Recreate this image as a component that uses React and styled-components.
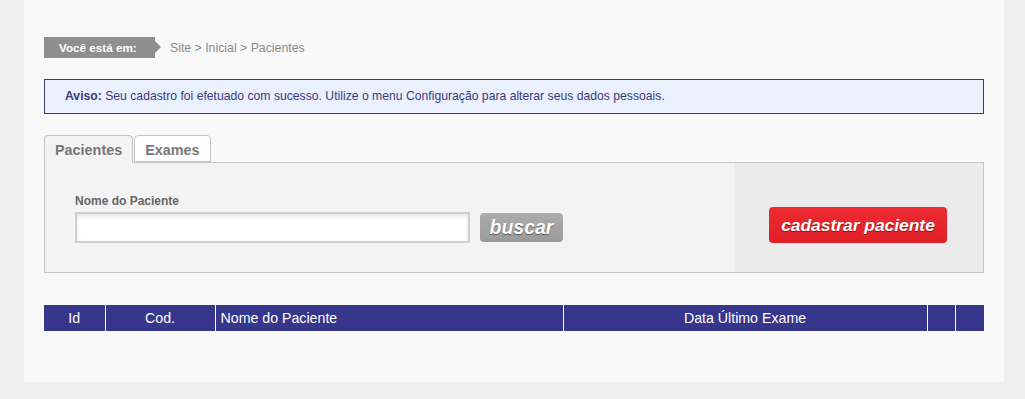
import React from "react";
import styled, { createGlobalStyle } from "styled-components";

const Global = createGlobalStyle`
  body {
    margin: 0;
    background: #efefef;
    font-family: "Liberation Sans", Arial, sans-serif;
  }
`;

const Page = styled.div`
  width: 980px;
  margin-left: 24px;
  box-sizing: border-box;
  padding: 37px 20px 51px;
  background: #f9f9f9;
`;

const Crumbs = styled.div`
  display: flex;
  align-items: center;
  height: 21px;
  font-size: 12px;
`;

const YouAre = styled.div`
  position: relative;
  width: 111px;
  height: 21px;
  box-sizing: border-box;
  padding-left: 15px;
  line-height: 21px;
  background: #8f8f8f;
  color: #fff;
  font-weight: bold;
  font-size: 11.7px;

  &::after {
    content: "";
    position: absolute;
    right: -6px;
    top: 4px;
    border-top: 6.5px solid transparent;
    border-bottom: 6.5px solid transparent;
    border-left: 6px solid #8f8f8f;
  }
`;

const Path = styled.span`
  margin-left: 15px;
  color: #8a8a8a;
  font-size: 12.3px;
`;

const Notice = styled.div`
  margin-top: 21px;
  height: 35px;
  box-sizing: border-box;
  border: 1px solid #3a3a7a;
  background: #eaf0fd;
  color: #3a3a7e;
  font-size: 12.2px;
  line-height: 33px;
  padding-left: 20px;

  b {
    font-weight: bold;
  }
`;

const Tabs = styled.div`
  display: flex;
  margin-top: 21px;
  position: relative;
  z-index: 1;
`;

const Tab = styled.div`
  height: ${(p) => (p.$active ? "28px" : "27px")};
  box-sizing: border-box;
  padding: 0 10px;
  margin-right: 1px;
  border: 1px solid #c4c4c4;
  border-bottom: ${(p) => (p.$active ? "none" : "1px solid #c4c4c4")};
  border-radius: 4px 4px 0 0;
  background: ${(p) => (p.$active ? "#f3f3f3" : "#fff")};
  color: #777;
  font-size: 14.4px;
  font-weight: bold;
  line-height: 28px;
`;

const Panel = styled.div`
  display: flex;
  height: 111px;
  margin-top: -1px;
  box-sizing: border-box;
  border: 1px solid #c6c6c6;
  background: #f3f3f3;
`;

const SearchArea = styled.div`
  flex: 1;
  padding: 31px 0 0 30px;
`;

const Label = styled.div`
  font-size: 12px;
  font-weight: bold;
  color: #666;
  height: 18px;
`;

const SearchRow = styled.div`
  display: flex;
  align-items: center;
  gap: 10px;
`;

const Input = styled.input`
  width: 395px;
  height: 31px;
  box-sizing: border-box;
  border: 2px solid #cfcfcf;
  box-shadow: inset 0 2px 4px rgba(0, 0, 0, 0.1);
  background: #fff;
  outline: none;
`;

const Button = styled.button`
  border: none;
  border-radius: 4px;
  padding: 0;
  color: #fff;
  font-family: "Liberation Sans", Arial, sans-serif;
  font-weight: bold;
  font-style: italic;
  text-shadow: 0 1px 1px rgba(0, 0, 0, 0.45);
  cursor: pointer;
`;

const GrayButton = styled(Button)`
  width: 83px;
  height: 29px;
  font-size: 19.5px;
  background: linear-gradient(#acacac, #9a9a9a);
`;

const RedButton = styled(Button)`
  width: 178px;
  height: 36px;
  font-size: 17.4px;
  background: linear-gradient(#ed2b31, #e11f27);
`;

const ActionArea = styled.div`
  width: 248px;
  background: #ebebeb;
  padding: 44px 0 0 34px;
  box-sizing: border-box;
`;

const Table = styled.table`
  width: 100%;
  margin-top: 32px;
  border-collapse: collapse;
  table-layout: fixed;
`;

const Th = styled.th`
  height: 26px;
  padding: 0 ${(p) => (p.$left ? "5px" : "0")};
  background: #35368c;
  color: #fff;
  font-size: 14.2px;
  font-weight: normal;
  text-align: ${(p) => (p.$left ? "left" : "center")};
  border-left: 1px solid #fff;

  &:first-child {
    border-left: none;
  }
`;

export default function App() {
  return (
    <>
      <Global />
      <Page>
        <Crumbs>
          <YouAre>Você está em:</YouAre>
          <Path>Site &gt; Inicial &gt; Pacientes</Path>
        </Crumbs>
        <Notice>
          <b>Aviso:</b> Seu cadastro foi efetuado com sucesso. Utilize o menu Configuração para alterar seus dados pessoais.
        </Notice>
        <Tabs>
          <Tab $active>Pacientes</Tab>
          <Tab>Exames</Tab>
        </Tabs>
        <Panel>
          <SearchArea>
            <Label>Nome do Paciente</Label>
            <SearchRow>
              <Input />
              <GrayButton>buscar</GrayButton>
            </SearchRow>
          </SearchArea>
          <ActionArea>
            <RedButton>cadastrar paciente</RedButton>
          </ActionArea>
        </Panel>
        <Table>
          <colgroup>
            <col style={{ width: 61 }} />
            <col style={{ width: 110 }} />
            <col style={{ width: 348 }} />
            <col style={{ width: 364 }} />
            <col style={{ width: 28 }} />
            <col style={{ width: 29 }} />
          </colgroup>
          <thead>
            <tr>
              <Th>Id</Th>
              <Th>Cod.</Th>
              <Th $left>Nome do Paciente</Th>
              <Th>Data Último Exame</Th>
              <Th />
              <Th />
            </tr>
          </thead>
        </Table>
      </Page>
    </>
  );
}
